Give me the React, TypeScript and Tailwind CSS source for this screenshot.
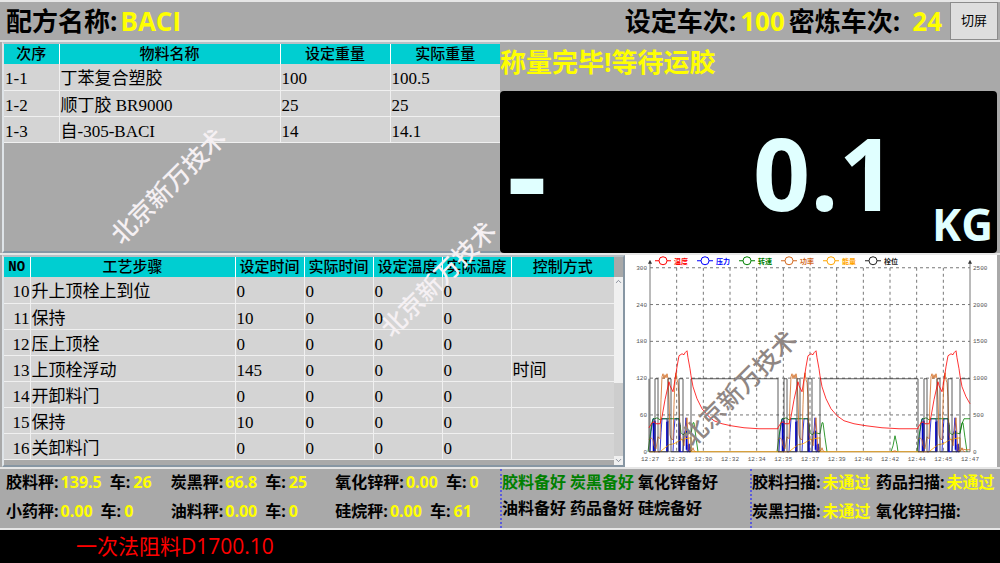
import { ChevronDown, ChevronUp } from "lucide-react";

const materials = [
  ["1-1", "丁苯复合塑胶", "100", "100.5"],
  ["1-2", "顺丁胶 BR9000", "25", "25"],
  ["1-3", "自-305-BACI", "14", "14.1"],
];

const steps = [
  ["10", "升上顶栓上到位", "0", "0", "0", "0", ""],
  ["11", "保持", "10", "0", "0", "0", ""],
  ["12", "压上顶栓", "0", "0", "0", "0", ""],
  ["13", "上顶栓浮动", "145", "0", "0", "0", "时间"],
  ["14", "开卸料门", "0", "0", "0", "0", ""],
  ["15", "保持", "10", "0", "0", "0", ""],
  ["16", "关卸料门", "0", "0", "0", "0", ""],
];

const scales = [
  { name: "胶料秤", value: "139.5", car: "26" },
  { name: "炭黑秤", value: "66.8", car: "25" },
  { name: "氧化锌秤", value: "0.00", car: "0" },
  { name: "小药秤", value: "0.00", car: "0" },
  { name: "油料秤", value: "0.00", car: "0" },
  { name: "硅烷秤", value: "0.00", car: "61" },
];

const ready = [
  { name: "胶料备好", ok: true },
  { name: "炭黑备好", ok: true },
  { name: "氧化锌备好", ok: false },
  { name: "油料备好", ok: false },
  { name: "药品备好", ok: false },
  { name: "硅烷备好", ok: false },
];

const scans = [
  { name: "胶料扫描", value: "未通过" },
  { name: "药品扫描", value: "未通过" },
  { name: "炭黑扫描", value: "未通过" },
  { name: "氧化锌扫描", value: "" },
];

const legend = [
  { name: "温度", color: "#ff0000" },
  { name: "压力", color: "#0000ff" },
  { name: "转速", color: "#008000" },
  { name: "功率", color: "#d2691e" },
  { name: "能量", color: "#ffa500" },
  { name: "栓位", color: "#222222" },
];

const times = ["12:27", "12:29", "12:30", "12:32", "12:34", "12:35", "12:37", "12:39", "12:40", "12:42", "12:44", "12:45", "12:47"];
const leftTicks = ["300", "240", "180", "120", "60", "0"];
const rightTicks = ["2500", "2000", "1500", "1000", "500", "0"];

// plot area of the chart
const X0 = 26;
const X1 = 346;
const Y0 = 13;
const Y1 = 197;
const tickY = (i: number) => Y0 + (i * (Y1 - Y0)) / 5;
const tickX = (i: number) => X0 + (i * (X1 - X0)) / 12;

// One batch, x counted from the start of the batch
function Batch({ x }: { x: number }) {
  return (
    <g transform={`translate(${x} 0)`} fill="none" strokeWidth="0.8">
      <path
        stroke="#0000cd"
        d="M1 197L2 177L4 164H5V197H6V166V197H11L12 178L13 164H18V197M19 197V166M24 197L25 176L26 164H30V197H31V170V197H34L35 180L36 176L37 163L38 175V197H39V190H40V197H41V192"
      />
      <path stroke="#0000cd" strokeWidth="1.6" d="M4.500 197V168M18 197V167M30.500 197V168M37.500 195V176M40 197V189" />
      <path
        stroke="#008000"
        d="M-1 197L1 182L3 168L4 164H6L8 163L11 165L13 164H30L31 170L32 178L34 180L37 178L42 179L44 168L45 168L47 183L49 197"
      />
      <path
        stroke="#d2691e"
        d="M0 185L2 183L4 185L5 191L7 194L9 182L11 184L12 145L13 122L14 119L15 124L16 120L17 123L18 119L19 124L20 145L21 180L22 184L24 185L25 150L26 124L27 118L28 125L29 128L30 142L31 180L32 184L34 186L35 191L36 180L37 171L38 163L39 180L40 196L43 196L44 193L45 196L47 197"
      />
      <path stroke="#ffa500" d="M0 197H11L16 193L20 190L25 189L32 185L36 184L42 183V197" />
      <path stroke="#333" d="M0 124V197H6V124H9V197H19V124H22V197H30V124H34V197H42V124" />
      <path stroke="#ff0000" d="M0 173L3 168L5 167L7 169L11 169L13 162L16 145L20 127L21 131L24 137L26 125L28 112L30 101L33 99L35 100L36 98L38 96L39 103L41 114L42 121" />
    </g>
  );
}

function TrendChart() {
  return (
    <svg viewBox="1 1 372 210" className="h-full w-full" fontFamily='"Liberation Sans", "Noto Sans CJK SC", sans-serif'>
      {/* grid */}
      <g stroke="#777" strokeWidth="1" strokeDasharray="3 3">
        {leftTicks.slice(0, 5).map((t, i) => (
          <line key={t} x1={X0} x2={X1} y1={tickY(i)} y2={tickY(i)} />
        ))}
        {times.slice(1, 12).map((t, i) => (
          <line key={t} x1={tickX(i + 1)} x2={tickX(i + 1)} y1={Y0} y2={Y1} />
        ))}
      </g>
      <g stroke="#777" strokeWidth="1" fill="#333">
        <path d={`M${X0} 8V${Y1}H${X1}V8`} fill="none" />
        <path d="M26 5l-2 4h4zM346 5l-2 4h4z" stroke="none" />
      </g>

      <Batch x={25} />
      <Batch x={154} />
      <Batch x={294} />

      {/* between the batches */}
      <g fill="none" strokeWidth="0.8">
        <path stroke="#333" d="M67 124H154M196 124H294M336 124H346" />
        <path
          stroke="#ff0000"
          d="M67 121L69 132L73 144L78 154L84 161L90 166L98 169L107 171L120 173L135 174L154 174V173M196 121L198 132L202 144L207 154L213 161L220 166L230 169L242 171L258 173L275 174L294 174V173M336 121L338 132L342 142L346 149"
        />
        <path stroke="#008000" d="M267 197L269 191L271 181L273 190L274 197M336 178L338 169L340 164H346" />
        <path stroke="#ffa500" d="M67 197H154M196 197H294" />
        <path stroke="#d2691e" d="M268 197L271 196L273 197M337 194L342 195H346" />
      </g>

      {/* legend */}
      {legend.map((l, i) => (
        <g key={l.name} transform={`translate(${39 + i * 42} 6)`}>
          <path d="M-8 0H-4M4 0H8" stroke={l.color} />
          <circle r="4" fill="#fff" stroke={l.color} />
          <text x="11" y="3" fontSize="7" fontWeight="bold" fill={l.color}>
            {l.name}
          </text>
        </g>
      ))}

      {/* axis labels */}
      <g fontSize="6" fill="#555" fontFamily='"Liberation Mono", monospace'>
        {leftTicks.map((t, i) => (
          <text key={t} x={X0 - 3} y={tickY(i) + 2} textAnchor="end">
            {t}
          </text>
        ))}
        {rightTicks.map((t, i) => (
          <text key={t} x={X1 + 3} y={tickY(i) + 2}>
            {t}
          </text>
        ))}
        {times.map((t, i) => (
          <text key={t} x={tickX(i)} y="206" textAnchor="middle">
            {t}
          </text>
        ))}
      </g>
    </svg>
  );
}

function Watermark({ className }: { className: string }) {
  return (
    <span
      className={`pointer-events-none absolute -translate-x-1/2 -translate-y-1/2 -rotate-45 text-[25px] leading-none font-medium whitespace-nowrap ${className}`}
    >
      北京新万技术
    </span>
  );
}

function Header() {
  return (
    <header className="flex h-[42px] items-center border-y-2 border-[#e6e6e6] pl-[6px] text-[26px] font-bold">
      <h1 className="flex-1">
        配方名称:<span className="ml-[3px] text-[#ffff00]">BACI</span>
      </h1>
      <p>
        设定车次:<span className="mx-1 text-[#ffff00]">100</span>
      </p>
      <p>
        密炼车次:<span className="ml-3 mr-2 text-[#ffff00]">24</span>
      </p>
      <button className="mr-[2px] h-[38px] w-12 cursor-pointer border border-[#8c8c8c] bg-[#dedede] text-[13px] font-normal hover:bg-[#ececec]">
        切屏
      </button>
    </header>
  );
}

function MaterialTable() {
  return (
    <section className="min-h-[211px] border-2 border-r-0 border-[#8796a3] border-t-[#b8c0c6] border-l-[#dfe4e8]">
      <table className="w-full table-fixed border-collapse font-['Liberation_Serif','Noto_Sans_CJK_SC',serif]">
        <thead>
          <tr className="h-5 bg-[#00ced1] text-[15px] leading-5">
            <th className="w-[55px] font-medium">次序</th>
            <th className="border-l border-white font-medium">物料名称</th>
            <th className="w-[110px] border-l border-white font-medium">设定重量</th>
            <th className="w-[110px] border-l border-white font-medium">实际重量</th>
          </tr>
        </thead>
        <tbody>
          {materials.map((row) => (
            <tr key={row[0]} className="h-[26px] border-b border-[#f0f0f0] bg-[#d4d4d4] text-[17px] leading-5">
              {row.map((cell, i) => (
                <td key={i} className="border-l border-[#f0f0f0] pt-[5px] pl-px first:border-l-0">
                  {cell}
                </td>
              ))}
            </tr>
          ))}
        </tbody>
      </table>
    </section>
  );
}

function WeightDisplay() {
  return (
    <section className="flex flex-col pr-[3px]">
      <p className="h-[49px] pt-[2px] text-[26px] leading-9 font-bold text-[#ffff00]">称量完毕!等待运胶</p>
      <div className="flex flex-1 items-center rounded-sm bg-black pl-[7px] font-bold text-[#e0ffff]">
        <span className="text-[124px] leading-none">-</span>
        <span className="flex-1 pr-9 text-right text-[100px] leading-none">0.1</span>
        <span className="self-end pr-1 pb-1 text-[44px] leading-[50px]">KG</span>
      </div>
    </section>
  );
}

function StepTable() {
  return (
    <section className="flex border-2 border-[#8796a3] border-t-[#b8c0c6] border-l-[#dfe4e8] pb-[5px]">
      <table className="flex-1 table-fixed border-collapse font-['Liberation_Serif','Noto_Sans_CJK_SC',serif]">
        <thead>
          <tr className="h-5 bg-[#00ced1] text-[15px] leading-5">
            <th className="w-[26px] font-['Liberation_Mono',monospace] text-sm font-bold">NO</th>
            <th className="border-l border-white font-medium">工艺步骤</th>
            <th className="w-[69px] border-l border-white font-medium">设定时间</th>
            <th className="w-[69px] border-l border-white font-medium">实际时间</th>
            <th className="w-[69px] border-l border-white font-medium">设定温度</th>
            <th className="w-[69px] border-l border-white font-medium">实际温度</th>
            <th className="w-[103px] border-l border-white font-medium">控制方式</th>
          </tr>
        </thead>
        <tbody>
          {steps.map((row) => (
            <tr key={row[0]} className="h-[26px] border-b border-[#f0f0f0] bg-[#d4d4d4] text-[17px] leading-5">
              {row.map((cell, i) => (
                <td key={i} className="border-l border-[#f0f0f0] pt-[5px] pl-px first:border-l-0 first:text-right">
                  {cell}
                </td>
              ))}
            </tr>
          ))}
        </tbody>
      </table>
      {/* scrollbar */}
      <div className="-mb-[5px] flex w-[9px] flex-col pt-5">
        <button aria-label="向上滚动" className="bg-[#f0f0f0] text-gray-500">
          <ChevronUp size={9} />
        </button>
        <div className="flex flex-1 flex-col bg-[#f0f0f0]">
          <div className="flex-4" />
          <div className="flex-3 bg-[#cdcdcd]" />
        </div>
        <button aria-label="向下滚动" className="bg-[#f0f0f0] text-gray-500">
          <ChevronDown size={9} />
        </button>
      </div>
    </section>
  );
}

function StatusBar() {
  return (
    <section className="grid grid-cols-[2fr_1fr_1fr] border-y-2 border-[#e6e6e6] text-[16px] leading-[26px] font-bold">
      <div className="grid grid-cols-3 content-start gap-y-[3px] pb-1 pl-[6px]">
        {scales.map((s) => (
          <p key={s.name} className="whitespace-nowrap">
            {s.name}:<span className="mr-2 ml-[2px] text-[#ffff00]">{s.value}</span>
            车:<span className="ml-[3px] text-[#ffff00]">{s.car}</span>
          </p>
        ))}
      </div>
      <div className="grid grid-cols-[68px_68px_1fr] content-start border-l-2 border-dotted border-[#5b5bdc]">
        {ready.map((r) => (
          <p key={r.name} className={r.ok ? "text-[#008000]" : ""}>
            {r.name}
          </p>
        ))}
      </div>
      <div className="grid grid-cols-[1fr_1fr] content-start gap-y-[3px] border-l-2 border-dotted border-[#5b5bdc]">
        {scans.map((s) => (
          <p key={s.name} className="whitespace-nowrap">
            {s.name}:<span className="ml-[2px] text-[#ffff00]">{s.value}</span>
          </p>
        ))}
      </div>
    </section>
  );
}

export default function App() {
  return (
    <div className="relative flex min-h-screen flex-col overflow-hidden bg-[#a9a9a9] font-['Open_Sans','Noto_Sans_CJK_SC',sans-serif] text-black">
      <Header />
      <main className="flex flex-col">
        <div className="grid grid-cols-2">
          <div className="pl-[2px]">
            <MaterialTable />
          </div>
          <WeightDisplay />
        </div>
        <div className="grid grid-cols-[5fr_3fr] border-t-2 border-[#e6e6e6]">
          <div className="pl-[2px]">
            <StepTable />
          </div>
          <div className="relative mr-[3px] bg-white">
            <div className="absolute inset-0">
              <TrendChart />
            </div>
          </div>
        </div>
        <StatusBar />
      </main>
      <footer className="flex-1 bg-black pt-[2px] pl-[76px] text-[21px] leading-[28px] text-[#ff0000]">
        一次法阻料D1700.10
      </footer>

      <Watermark className="top-[186px] left-[168px] text-[#f5f0f3]" />
      <Watermark className="top-[279px] left-[438px] text-[#f5f0f3]" />
      <Watermark className="top-[388px] left-[739px] text-[#8f8683]" />
    </div>
  );
}
